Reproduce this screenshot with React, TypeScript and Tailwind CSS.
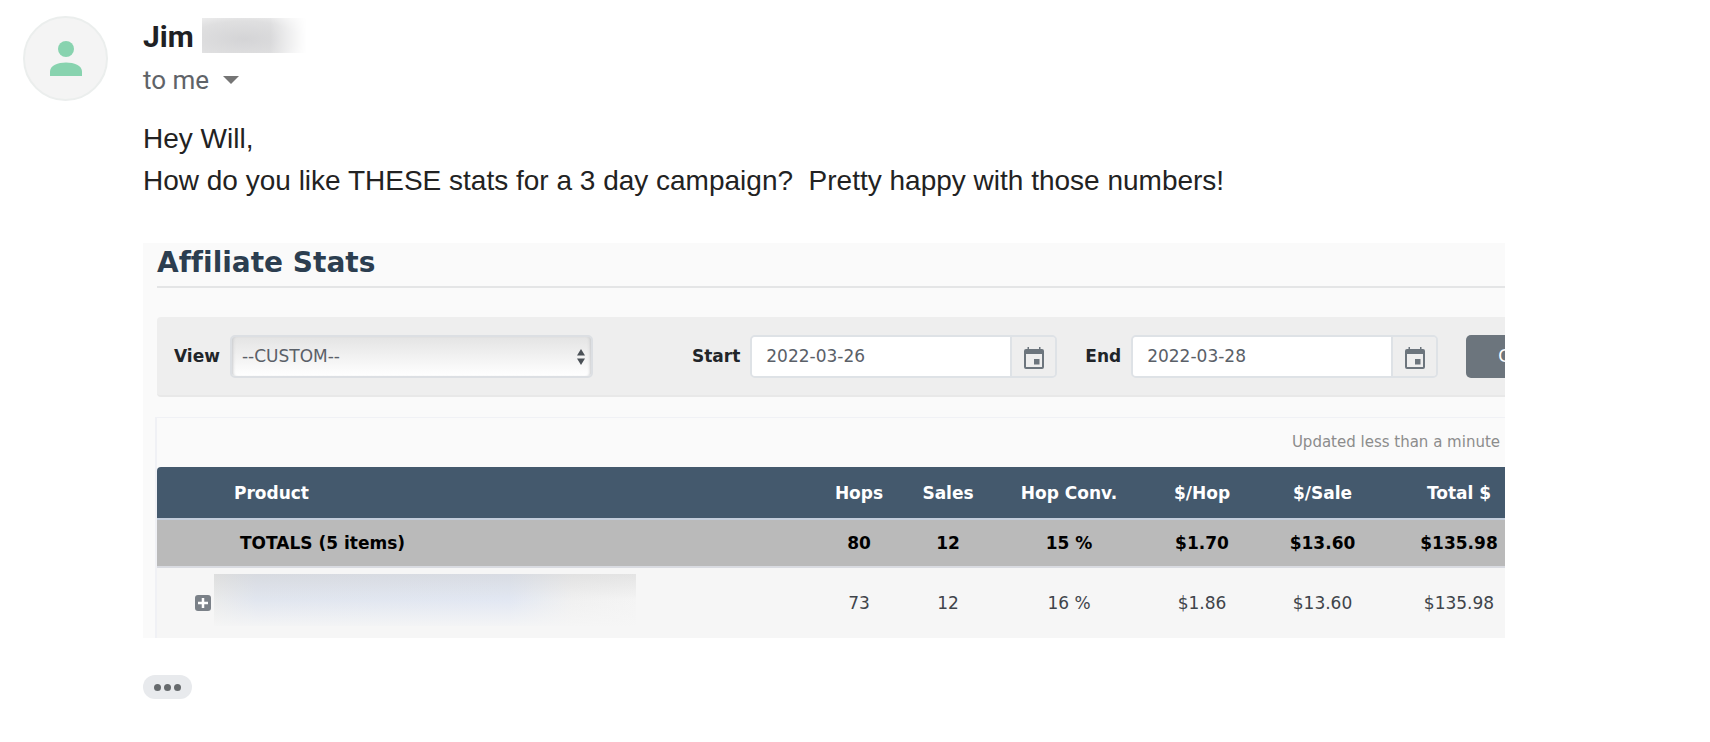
import { ReactNode } from "react";

interface StatRow {
  hops: string;
  sales: string;
  conv: string;
  perHop: string;
  perSale: string;
  total: string;
}

const totals: StatRow = {
  hops: "80",
  sales: "12",
  conv: "15 %",
  perHop: "$1.70",
  perSale: "$13.60",
  total: "$135.98",
};

const firstProduct: StatRow = {
  hops: "73",
  sales: "12",
  conv: "16 %",
  perHop: "$1.86",
  perSale: "$13.60",
  total: "$135.98",
};

function CalendarIcon() {
  return (
    <svg viewBox="0 0 20 22" className="mt-1 h-[22px] w-5" aria-hidden="true">
      <path
        fill="#6c757d"
        d="M3.500 0h1.500v2h10V0h1.500v2H18a2 2 0 0 1 2 2v16a2 2 0 0 1-2 2H2a2 2 0 0 1-2-2V4a2 2 0 0 1 2-2h1.500zM2 7v13h16V7z"
      />
      <rect x="10" y="12" width="5.500" height="5.500" fill="#6c757d" />
    </svg>
  );
}

interface DateFieldProps {
  id: string;
  label: string;
  value: string;
}

function DateField({ id, label, value }: DateFieldProps) {
  return (
    <div className="flex shrink-0 items-center gap-2.5">
      <label htmlFor={id} className="font-bold text-[#212529]">
        {label}
      </label>
      <div className="flex h-[43px] overflow-hidden rounded-[5px] border-2 border-[#dee2e6]">
        <input
          id={id}
          type="text"
          defaultValue={value}
          className="w-[258px] bg-white pl-3.5 text-[#5a6068] outline-none"
        />
        <button
          type="button"
          aria-label={`Pick ${label} date`}
          className="flex w-[45px] items-center justify-center border-l-2 border-[#dee2e6] bg-[#eeeeee]"
        >
          <CalendarIcon />
        </button>
      </div>
    </div>
  );
}

function StatCells({ row }: { row: StatRow }) {
  return (
    <>
      <td>{row.hops}</td>
      <td>{row.sales}</td>
      <td>{row.conv}</td>
      <td>{row.perHop}</td>
      <td>{row.perSale}</td>
      <td>{row.total}</td>
    </>
  );
}

function StatsTable() {
  return (
    <table className="w-full table-fixed border-collapse text-center">
      <colgroup>
        <col />
        <col className="w-[88px]" />
        <col className="w-[90px]" />
        <col className="w-[152px]" />
        <col className="w-[114px]" />
        <col className="w-[127px]" />
        <col className="w-[146px]" />
      </colgroup>
      <thead>
        <tr className="h-[52px] border-b-2 border-[#c3cddb] bg-[#44596d] text-white">
          <th className="pl-[77px] text-left">Product</th>
          <th>Hops</th>
          <th>Sales</th>
          <th>Hop Conv.</th>
          <th>$/Hop</th>
          <th>$/Sale</th>
          <th>Total $</th>
        </tr>
      </thead>
      <tbody>
        <tr className="h-12 border-b-2 border-[#d9dbe1] bg-[#bababa] font-bold text-black">
          <td className="pl-[83px] text-left">TOTALS (5 items)</td>
          <StatCells row={totals} />
        </tr>
        <tr className="h-[71px] bg-[#f6f6f6] text-[#40444a]">
          <td className="pt-1.5 align-top">
            <div className="flex items-center gap-[3px] pl-[38px]">
              <button
                type="button"
                aria-label="Expand product"
                className="mt-1.5 flex size-4 shrink-0 items-center justify-center rounded-[3px] bg-[#7b8188]"
              >
                <svg viewBox="0 0 12 12" className="size-3" aria-hidden="true">
                  <path d="M6 1v10M1 6h10" stroke="#fff" strokeWidth="2.500" />
                </svg>
              </button>
              <div className="h-[52px] w-[422px] bg-[linear-gradient(to_right,#e9eaea_0%,#dfe4ee_10%,#e0e6f2_70%,#f0f0f0_85%,#f4f4f4_100%)]">
                <div className="h-full bg-linear-to-b from-[#cccccc]/40 via-[#f6f6f6]/10 to-[#f6f6f6]/90" />
              </div>
            </div>
          </td>
          <StatCells row={firstProduct} />
        </tr>
      </tbody>
    </table>
  );
}

function AffiliateStats() {
  return (
    <section className="overflow-hidden bg-[#fafafa] pl-3.5 font-['Verdana','DejaVu_Sans',sans-serif] text-[17px] leading-6 [font-variant-ligatures:none]">
      <h2 className="h-[45px] border-b-2 border-[#e4e5e6] text-[28px] leading-10 font-bold text-[#2c3e50]">
        Affiliate Stats
      </h2>

      {/* Filters */}
      <form className="-mr-24 mt-[29px] flex h-20 items-center rounded-l-[4px] border-b-2 border-[#e8e8e8] bg-[#eeeeee] pl-[17px]">
        <div className="mr-[99px] flex shrink-0 items-center gap-2.5">
          <label htmlFor="view" className="font-bold text-[#212529]">
            View
          </label>
          <div className="relative">
            <select
              id="view"
              className="block h-[43px] w-[363px] appearance-none rounded-[5px] border-2 border-[#dcdfe3] bg-linear-to-b from-[#e4e4e4] to-white pl-2.5 text-[#5a6068] shadow-[inset_3px_0_3px_-2px_#c8cacc,inset_-3px_0_3px_-2px_#c8cacc]"
            >
              <option>--CUSTOM--</option>
            </select>
            <svg
              viewBox="0 0 8 16"
              className="pointer-events-none absolute top-[14px] right-2 h-4 w-2"
              aria-hidden="true"
            >
              <path d="M4 0l4 6.500H0zM4 16L0 9.500h8z" fill="#4b5157" />
            </svg>
          </div>
        </div>
        <div className="flex shrink-0 items-center gap-7">
          <DateField id="start" label="Start" value="2022-03-26" />
          <DateField id="end" label="End" value="2022-03-28" />
          <button type="submit" className="h-[43px] w-24 shrink-0 rounded-[5px] bg-[#6c757d] pl-8 text-left text-white">
            GO
          </button>
        </div>
      </form>

      <div className="mt-5 -ml-0.5 border-t border-l-2 border-[#f0f1f5]">
        <p className="mr-[5px] pt-3 pb-[13px] text-right text-[15px] text-[#8c8c8c]">
          Updated less than a minute
        </p>
        <div className="-mr-[27px] overflow-hidden rounded-tl-[4px]">
          <StatsTable />
        </div>
      </div>
    </section>
  );
}

function Message({ children }: { children: ReactNode }) {
  return (
    <div className="flex pt-4 pr-[205px] pl-[23px] font-['Liberation_Sans',Arial,sans-serif] text-[#222222]">
      <div className="mr-[35px] flex size-[85px] shrink-0 items-center justify-center rounded-full border-2 border-[#ebeeed] bg-[#f4f4f4]">
        <svg viewBox="0 0 32 35" className="h-[35px] w-8" fill="#88d3af" aria-hidden="true">
          <circle cx="16" cy="8" r="8" />
          <path d="M0 35v-4.500C0 24.500 8 21.500 16 21.500s16 3 16 9V35z" />
        </svg>
      </div>
      <div className="min-w-0 flex-1">{children}</div>
    </div>
  );
}

export default function App() {
  return (
    <main className="min-h-screen bg-white">
      <Message>
        {/* Sender */}
        <div className="flex h-[42px] gap-2 pt-0.5 font-['Roboto',sans-serif]">
          <span className="text-[30px] leading-[38px] font-bold text-[#202124]">Jim</span>
          <div className="h-[35px] w-[105px] bg-[radial-gradient(ellipse_at_40%_60%,#d4d4d6_0%,#dfdfe0_60%,#f4f4f4_100%)] mask-r-from-65%" />
        </div>
        <button
          type="button"
          className="flex h-11 items-center gap-3.5 font-['Roboto',sans-serif] text-[26px] text-[#5f6368]"
        >
          to me
          <svg viewBox="0 0 16 8" className="h-2 w-4" fill="#757575" aria-hidden="true">
            <path d="M0 0h16L8 8z" />
          </svg>
        </button>

        <div className="mt-4 mb-[41px] text-[28px] leading-[42px]">
          <p>Hey Will,</p>
          <p className="whitespace-pre-wrap">
            {"How do you like THESE stats for a 3 day campaign?  Pretty happy with those numbers!"}
          </p>
        </div>

        <AffiliateStats />

        <button
          type="button"
          aria-label="Show trimmed content"
          className="mt-[37px] flex h-6 w-[49px] items-center justify-center gap-[3px] rounded-full bg-[#e8eaed]"
        >
          <span className="size-[7px] rounded-full bg-[#666a6d]" />
          <span className="size-[7px] rounded-full bg-[#666a6d]" />
          <span className="size-[7px] rounded-full bg-[#666a6d]" />
        </button>
      </Message>
    </main>
  );
}
